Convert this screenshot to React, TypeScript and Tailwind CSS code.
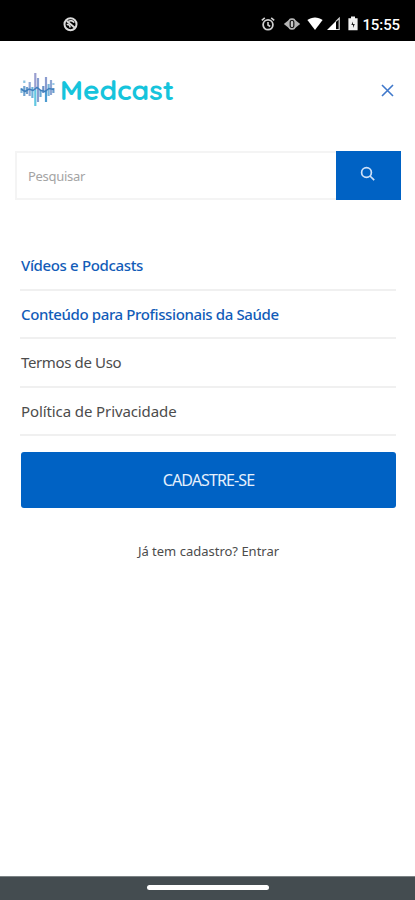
import React from "react";
import { clsx } from "clsx";

interface MenuItem {
  label: string;
  highlight?: boolean;
  textClass: string;
}

const menuItems: MenuItem[] = [
  { label: "Vídeos e Podcasts", highlight: true, textClass: "tracking-[-0.35px]" },
  { label: "Conteúdo para Profissionais da Saúde", highlight: true, textClass: "tracking-[-0.38px]" },
  { label: "Termos de Uso", textClass: "tracking-[-0.36px]" },
  { label: "Política de Privacidade", textClass: "tracking-[-0.1px]" },
];

// x, top, bottom, colour
const bars: [number, number, number, string][] = [
  [1.5, 16, 21, "#86b9da"],
  [4.3, 8.5, 11, "#8cc4e0"],
  [4.3, 14, 24, "#6ea3d0"],
  [7, 15, 22, "#6f9fcd"],
  [9.7, 10, 24, "#8fa9d5"],
  [12.4, 15, 26, "#6cb2da"],
  [15.3, 1, 18, "#9a9fd0"],
  [15.3, 18, 34, "#62c8e2"],
  [18, 6, 30, "#8a9fd0"],
  [20.5, 18, 25, "#6aa9d6"],
  [23.3, 14, 21, "#6b92c7"],
  [26, 5, 18, "#8a9ccf"],
  [26, 18, 30, "#4c9bd0"],
  [28.6, 12, 24, "#79b4da"],
  [31, 8, 23, "#8ea6d3"],
  [33.4, 11, 13, "#9bc9e4"],
  [33.4, 16, 21, "#6c9fcf"],
];

const Waveform = () => (
  <svg width="35" height="36" viewBox="0 0 35 36" className="shrink-0" fill="none">
    {bars.map(([x, top, bottom, color], idx) => (
      <path key={idx} d={`M${x} ${top}V${bottom}`} stroke={color} strokeWidth="2.2" />
    ))}
    <path d="M1 17l4 2.500 4-2.500 4 1.500 4-3 4 3 4 1 4-3 5 1" stroke="#3e7fbd" strokeWidth="1.500" />
  </svg>
);

const StatusBar = () => (
  <div className="flex h-[41px] shrink-0 items-start justify-between bg-black pt-4 pr-[15px] pl-[63px] text-white">
    <svg width="15" height="16" viewBox="0 0 15 16" fill="none" stroke="#dcdcdc">
      <circle cx="7.5" cy="8.2" r="6" strokeWidth="2" />
      <path d="M3.8 5l8 6.800" strokeWidth="2" />
      <path d="M5.500 5.200c2.400-1 4.800-.4 5.500 1.600M3.800 8.700c1.600-.6 3 .4 3.400 2.800" strokeWidth="1.6" />
    </svg>

    <div className="flex items-center">
      {/* Alarm */}
      <svg width="14" height="16" viewBox="0 0 14 16" fill="none" stroke="#d0d0d0">
        <circle cx="7" cy="8.8" r="4.9" strokeWidth="1.8" />
        <path d="M.8 4.4l3-2.5M13.2 4.4l-3-2.5M7 6v3l2.2 1.5" strokeWidth="1.6" />
      </svg>
      {/* Vibrate */}
      <svg width="18" height="16" viewBox="0 0 18 16" className="ml-2">
        <path d="M.8 8l5-4h6.400l5 4-5 4H5.800z" fill="#b4b4b4" />
        <rect x="5.500" y="2.300" width="7" height="11.400" rx="3" fill="#b4b4b4" />
        <rect x="7.200" y="4.500" width="3.600" height="7" rx="1.500" fill="#c8c8c8" stroke="#111" strokeWidth="1.200" />
      </svg>
      {/* Wifi */}
      <svg width="16" height="16" viewBox="0 0 16 16" className="ml-[6px]" fill="#fff">
        <path d="M.4 4C4.800.6 11.200.6 15.600 4L8 14z" />
      </svg>
      {/* Signal */}
      <svg width="14" height="16" viewBox="0 0 14 16" className="ml-[4px]">
        <path d="M0 14L9 5v9z" fill="#fff" />
        <path d="M9 5.300l3.200-3.200v11.400H9" fill="none" stroke="#d8d8d8" strokeWidth="1.200" />
      </svg>
      {/* Battery */}
      <svg width="10" height="16" viewBox="0 0 10 16" className="ml-[7px]" fill="#f2f2f2">
        <path d="M3 .5h4v1.800h2.600v12H.4v-12H3z" />
        <path d="M5 5.500L3.300 9H5v3l1.800-4H5z" fill="#222" />
      </svg>
      <span className="relative top-px ml-[4px] font-[Roboto] text-[15px] leading-4 font-medium tracking-[-0.1px]">
        15:55
      </span>
    </div>
  </div>
);

export default function App() {
  return (
    <div className="flex h-[900px] w-[415px] flex-col overflow-hidden bg-white font-['Noto_Sans',sans-serif] text-[#4c4c4c]">
      <StatusBar />

      <header className="flex h-[68px] shrink-0 items-start justify-between pt-[31px] pr-[21px] pl-5">
        <div className="flex items-center">
          <Waveform />
          <span className="ml-[5px] font-['Quicksand','Lato',sans-serif] text-[28px] leading-9 font-bold text-[#16c4dc]">
            Medcast
          </span>
        </div>
        <button aria-label="Fechar" className="mt-3">
          <svg width="13" height="13" viewBox="0 0 13 13" stroke="#3f78cb" strokeWidth="1.600">
            <path d="M1 1l11 11M12 1L1 12" />
          </svg>
        </button>
      </header>

      <form className="mt-[42px] mr-[14px] ml-[15px] flex h-[49px] shrink-0">
        <input
          type="text"
          placeholder="Pesquisar"
          className="min-w-0 flex-1 border-2 border-r-0 border-[#f4f4f4] pt-0.5 pl-[11px] text-[13px] tracking-[-0.3px] placeholder:text-[#a4a4a4]"
        />
        <button type="button" aria-label="Buscar" className="flex w-[65px] items-center justify-center bg-[#0062c4] pr-0.5 pb-1">
          <svg width="15" height="15" viewBox="0 0 15 15" fill="none" stroke="#cfe1f8" strokeWidth="1.700">
            <circle cx="6.500" cy="6.500" r="4.900" />
            <path d="M10 10l4.200 4.200" />
          </svg>
        </button>
      </form>

      <nav className="mt-[42px] pr-[19px] pl-5">
        <ul>
          {menuItems.map((item) => (
            <li
              key={item.label}
              className="flex h-[48.5px] items-center border-b-2 border-[#f0f0f0] pl-px"
            >
              <a
                className={clsx(
                  "text-[15px] whitespace-nowrap",
                  item.textClass,
                  item.highlight ? "font-medium text-[#125cb8]" : "text-[#4c4c4c]"
                )}
              >
                {item.label}
              </a>
            </li>
          ))}
        </ul>
      </nav>

      <div className="mt-4 flex flex-col items-center pr-[19px] pl-[21px]">
        <button className="h-14 w-full rounded-[3px] bg-[#0062c4] text-[16px] tracking-[-0.9px] text-[#e6f0fd]">
          CADASTRE-SE
        </button>
        <p className="mt-[33px] text-[13px] leading-5">Já tem cadastro? Entrar</p>
      </div>

      <div className="mt-auto flex h-[24px] shrink-0 justify-center border-t border-[#7b8385] bg-[#444c50] pt-2">
        <div className="h-[5px] w-[122px] rounded-full bg-white" />
      </div>
    </div>
  );
}
